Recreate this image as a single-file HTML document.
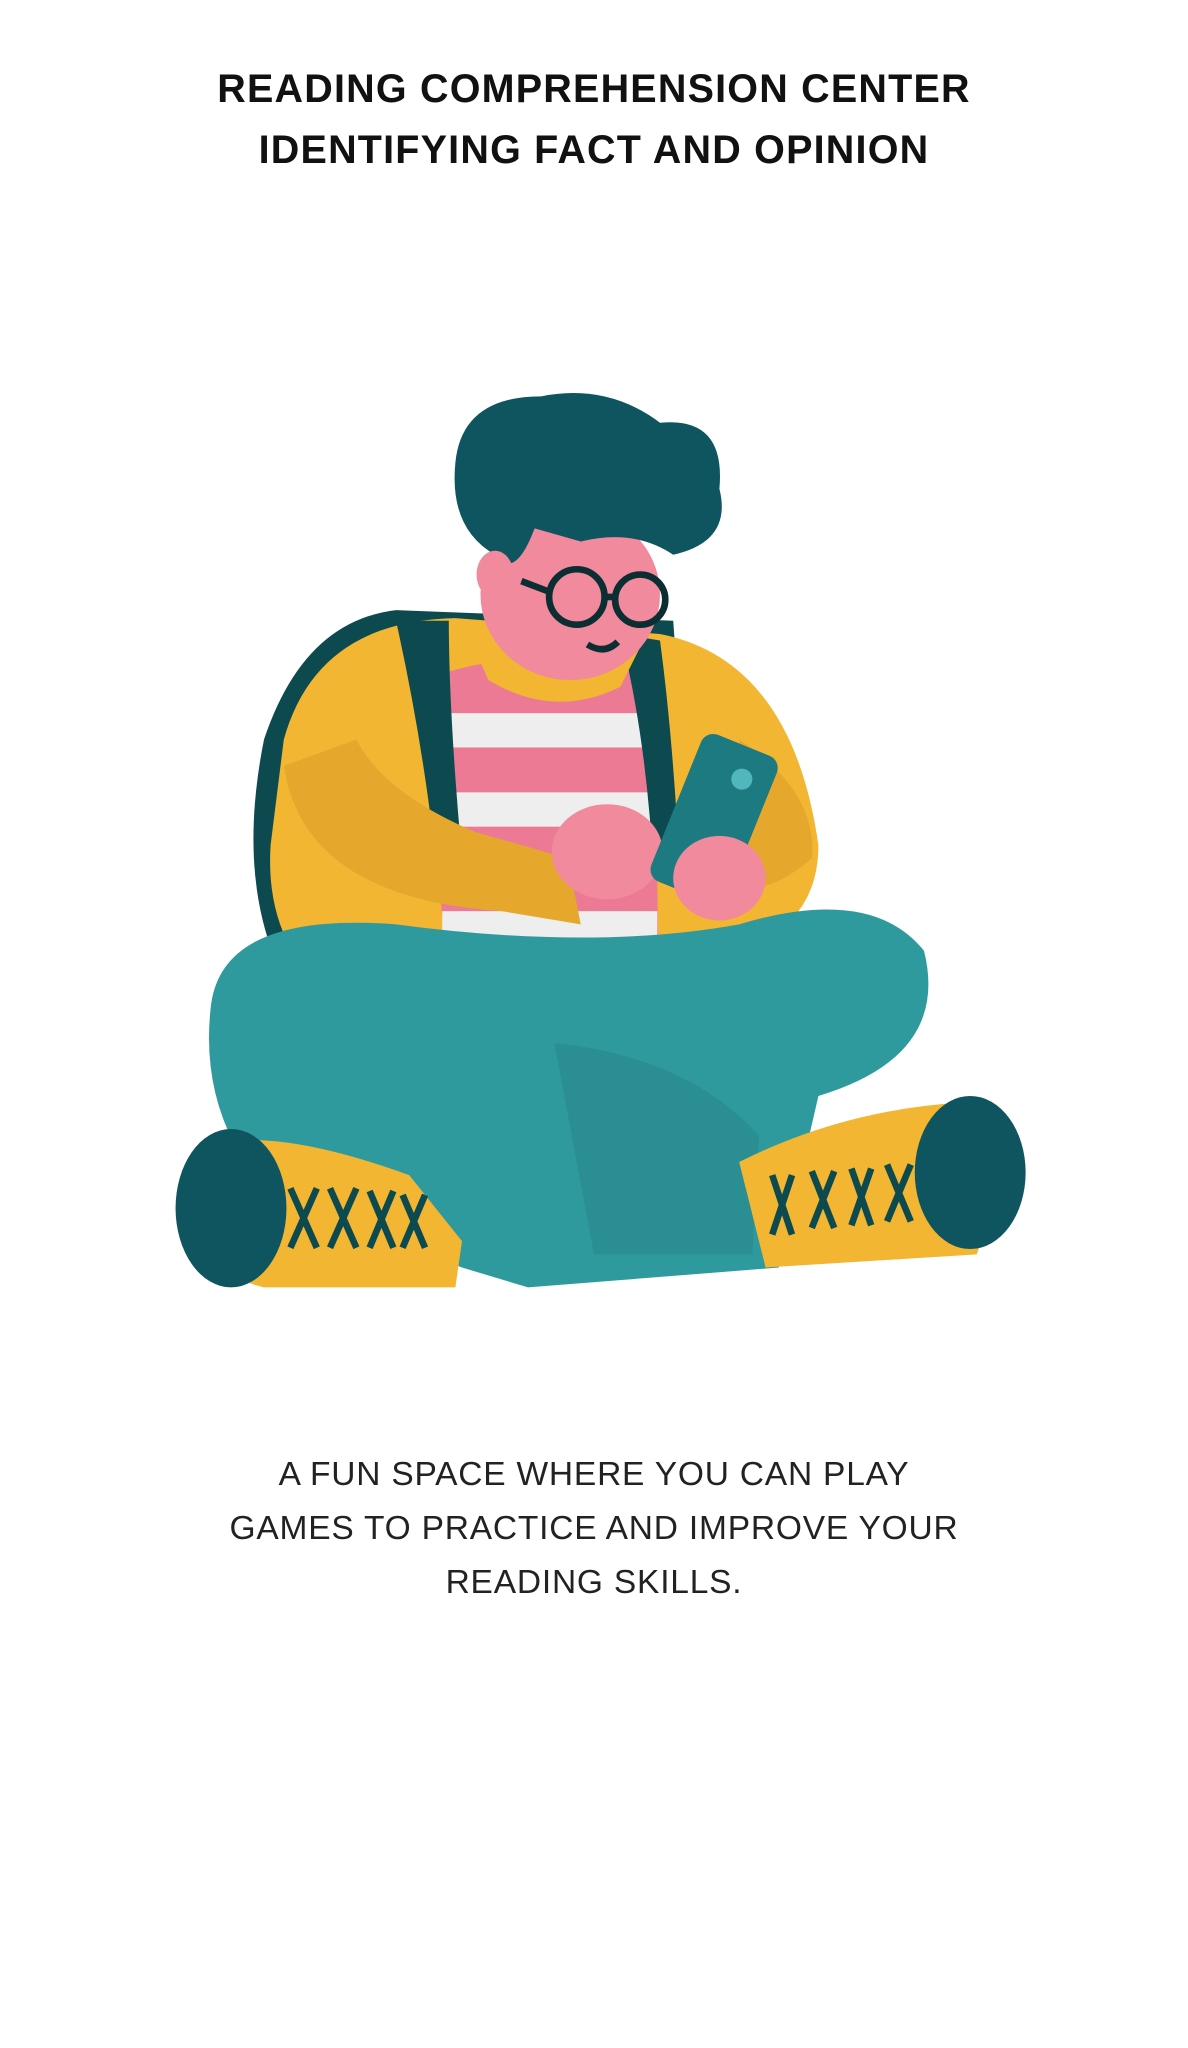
<!DOCTYPE html>
<html><head><meta charset="utf-8"><style>
html,body{margin:0;padding:0;background:#fff;}
body{width:1188px;height:2048px;position:relative;overflow:hidden;font-family:"Liberation Sans",sans-serif;}
.t{position:absolute;left:0;width:1188px;text-align:center;color:#111;}
.title{top:59px;font-size:39.5px;font-weight:bold;line-height:61px;letter-spacing:1.2px;}
.body{top:1448px;font-size:33.5px;line-height:54px;font-weight:normal;color:#222;letter-spacing:0.8px;}
svg{position:absolute;left:0;top:0;}
</style></head><body>
<div class="t title">READING COMPREHENSION CENTER<br>IDENTIFYING FACT AND OPINION</div>
<svg width="1188" height="2048" viewBox="0 0 900 1551">
<path d="M200 560 Q230 470 300 462 L510 470 Q520 600 500 720 L210 730 Q180 660 200 560Z" fill="#0d4a4f"/>
<path d="M215 560 Q240 470 345 468 L500 480 Q600 500 620 640 Q620 700 560 720 L480 760 L260 760 Q200 720 205 640Z" fill="#f2b632"/>
<path d="M335 510 Q400 490 495 500 L500 790 L345 790 Q325 650 335 510Z" fill="#ec7a95"/>
<g fill="#eeeeee">
<rect x="333" y="540" width="165" height="26"/>
<rect x="330" y="600" width="168" height="26"/>
<rect x="335" y="690" width="163" height="24"/>
<rect x="340" y="752" width="158" height="22"/>
</g>
<path d="M300 470 Q320 560 330 650 L350 650 Q340 540 340 470Z" fill="#0d4a4f"/>
<path d="M470 480 Q490 560 495 660 L515 660 Q510 560 500 485Z" fill="#0d4a4f"/>
<path d="M350 470 Q420 530 490 480 L470 520 Q420 545 370 515Z" fill="#f2b632"/>
<path d="M215 580 Q230 680 380 690 L440 700 L430 650 L360 630 Q290 600 270 560Z" fill="#e6a82c"/>
<path d="M560 560 Q620 600 615 650 Q580 680 555 670 L560 620Z" fill="#e6a82c"/>
<path d="M160 760 Q170 690 300 700 Q450 720 560 700 Q660 670 700 720 Q720 800 620 830 L590 960 L400 975 L350 960 L200 900 Q150 840 160 760Z" fill="#2e9a9e"/>
<path d="M420 790 Q520 800 575 860 L570 950 L450 950Z" fill="#2a8e93"/>
<path d="M150 870 Q200 850 310 890 L350 940 L345 975 L200 975 Q140 960 140 920Z" fill="#f2b632"/>
<ellipse cx="175" cy="915" rx="42" ry="60" fill="#0f5560"/>
<path d="M560 880 Q640 840 730 835 L760 890 L740 950 L580 960Z" fill="#f2b632"/>
<ellipse cx="735" cy="888" rx="42" ry="58" fill="#0f5560"/>
<g stroke="#0d4a4f" stroke-width="5" fill="none">
<path d="M220 900 L240 945 M240 900 L220 945 M250 900 L270 945 M270 900 L250 945 M280 902 L298 945 M298 902 L280 945 M305 905 L322 945 M322 905 L305 945"/>
<path d="M585 890 L600 935 M600 890 L585 935 M615 887 L632 930 M632 887 L615 930 M645 885 L660 928 M660 885 L645 928 M672 882 L690 925 M690 882 L672 925"/>
</g>
<ellipse cx="460" cy="645" rx="42" ry="36" fill="#f08a9c"/>
<rect x="510" y="560" width="62" height="120" rx="10" fill="#1d7a80" transform="rotate(22 541 620)"/>
<circle cx="562" cy="590" r="8" fill="#4fb7bd"/>
<ellipse cx="545" cy="665" rx="35" ry="32" fill="#f08a9c"/>
<ellipse cx="432" cy="450" rx="68" ry="65" fill="#f08a9c"/>
<path d="M345 350 Q350 300 410 300 Q460 290 500 320 Q550 315 545 370 Q555 410 510 420 Q480 400 440 410 L405 400 Q390 440 375 420 Q340 400 345 350Z" fill="#0f5560"/>
<ellipse cx="375" cy="435" rx="14" ry="18" fill="#f08a9c"/>
<g stroke="#0b2e33" stroke-width="5" fill="none">
<circle cx="437" cy="452" r="21"/>
<circle cx="485" cy="454" r="19"/>
<path d="M458 452 L466 452 M416 448 L395 440"/>
<path d="M445 488 Q458 496 468 486"/>
</g>
</svg>
<div class="t body">A FUN SPACE WHERE YOU CAN PLAY<br>GAMES TO PRACTICE AND IMPROVE YOUR<br>READING SKILLS.</div>
</body></html>
